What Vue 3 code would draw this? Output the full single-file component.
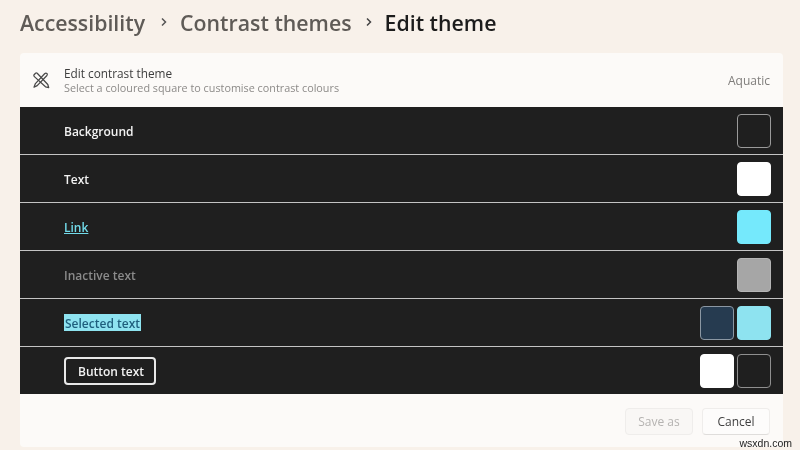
<script setup>
const rows = [
  { label: 'Background', kind: 'plain', swatches: [{ color: '#1f1f1f', edge: '#9a9a9a' }] },
  { label: 'Text', kind: 'plain', swatches: [{ color: '#ffffff', edge: '#ffffff' }] },
  { label: 'Link', kind: 'link', swatches: [{ color: '#75e9fc', edge: '#75e9fc' }] },
  { label: 'Inactive text', kind: 'inactive', swatches: [{ color: '#a6a6a6', edge: '#b5b5b5' }] },
  { label: 'Selected text', kind: 'selected', swatches: [{ color: '#263b50', edge: '#8b97a3' }, { color: '#8ee3f0', edge: '#8ee3f0' }] },
  { label: 'Button text', kind: 'button', swatches: [{ color: '#ffffff', edge: '#ffffff' }, { color: '#1f1f1f', edge: '#8f8f8f' }] },
]
</script>

<template>
  <div class="page">
    <nav class="crumbs">
      <span class="crumb">Accessibility</span>
      <svg class="chev first" viewBox="0 0 8 12"><path d="M2 2.5 5.5 6 2 9.5" fill="none" stroke="#555" stroke-width="1.5" /></svg>
      <span class="crumb">Contrast themes</span>
      <svg class="chev" viewBox="0 0 8 12"><path d="M2 2.5 5.5 6 2 9.5" fill="none" stroke="#444" stroke-width="1.5" /></svg>
      <span class="crumb current">Edit theme</span>
    </nav>

    <section class="card">
      <header class="head">
        <svg class="tool" viewBox="0 0 18 18" fill="none" stroke="#4a4a4a" stroke-width="1.25" stroke-linejoin="round" stroke-linecap="round">
          <path d="M3.4 12.6 12.6 2.8c.7-.7 1.7-.8 2.3-.3s.5 1.5-.2 2.2L5.2 14.6l-3.2 1.6z" />
          <path d="M1.9 4 3.5 2.3c.5-.5 1.2-.5 1.7 0l10.6 11.2.9 3.1-3.2-.8L2.4 5.6C1.9 5.2 1.7 4.5 1.9 4z" />
        </svg>
        <div class="head-text">
          <div class="head-title">Edit contrast theme</div>
          <div class="head-sub">Select a coloured square to customise contrast colours</div>
        </div>
        <span class="theme">Aquatic</span>
      </header>

      <div class="rows">
        <div v-for="row in rows" :key="row.label" class="row">
          <span :class="['label', row.kind]">{{ row.label }}</span>
          <div class="swatches">
            <span
              v-for="(s, i) in row.swatches"
              :key="i"
              class="swatch"
              :style="{ background: s.color, borderColor: s.edge }"
            ></span>
          </div>
        </div>
      </div>

      <footer class="foot">
        <span class="btn disabled">Save as</span>
        <span class="btn">Cancel</span>
      </footer>
    </section>

    <span class="mark">wsxdn.com</span>
  </div>
</template>

<style scoped>
.page {
  position: relative;
  width: 800px;
  height: 450px;
  overflow: hidden;
  box-sizing: border-box;
  padding: 0 17px 0 20px;
  background: #f8f1ea;
  font-family: "Open Sans", "Noto Sans", sans-serif;
  filter: blur(0.35px);
}
.crumbs {
  display: flex;
  align-items: center;
  height: 53px;
  box-sizing: border-box;
  padding-bottom: 9px;
}
.crumb {
  font-size: 21.3px;
  font-weight: 600;
  color: #5f5b57;
}
.crumb.current { color: #1c1c1c; }
.chev { width: 8px; height: 12px; margin: 0 12px 0 13px; }
.chev.first { margin-left: 15px; }
.card {
  background: #fcfaf8;
  border-radius: 4px;
  overflow: hidden;
  height: 394px;
  display: flex;
  flex-direction: column;
}
.head {
  height: 54px;
  display: flex;
  align-items: center;
  padding: 0 13px 0 12px;
  flex: none;
  box-sizing: border-box;
}
.tool { width: 18px; height: 18px; margin-right: 14px; flex: none; }
.head-text { flex: 1; }
.head-title { font-size: 11.8px; line-height: 16px; color: #3d3d3d; }
.head-sub { font-size: 10.8px; line-height: 14px; color: #8c8a88; }
.theme { font-size: 12px; color: #7f7d7b; }
.rows { background: #1f1f1f; flex: none; }
.row {
  height: 48px;
  box-sizing: border-box;
  display: flex;
  align-items: center;
  justify-content: space-between;
  padding: 0 12px 0 44px;
  border-bottom: 1px solid #c4c4c4;
}
.row:last-child { border-bottom: 0; height: 47px; }
.label { font-size: 12px; font-weight: 600; color: #f2f2f2; line-height: 16px; margin-top: 2px; }
.link { color: #72dbea; text-decoration: underline; }
.inactive { color: #8b8b8b; }
.selected {
  background: #8ee3f0;
  color: #1f5f7d;
  padding: 2px 1px 0;
  line-height: 15px;
  margin-top: 0;
}
.button {
  border: 2px solid #e8e8e8;
  border-radius: 4px;
  padding: 5px 12px 0;
  width: 92px;
  height: 28px;
  box-sizing: border-box;
  margin-top: 0;
  white-space: nowrap;
}
.swatches { display: flex; gap: 3px; }
.swatch {
  width: 34px;
  height: 34px;
  box-sizing: border-box;
  border: 1.5px solid;
  border-radius: 4px;
}
.foot {
  flex: 1;
  display: flex;
  justify-content: flex-end;
  align-items: center;
  gap: 9px;
  padding: 1px 13px 0;
}
.btn {
  width: 68px;
  height: 27px;
  box-sizing: border-box;
  display: flex;
  align-items: center;
  justify-content: center;
  padding-top: 1px;
  font-size: 12px;
  color: #3f3f3f;
  background: #fdfcfb;
  border: 1px solid #efedeb;
  border-bottom-color: #dfdddb;
  border-radius: 4px;
}
.btn.disabled { color: #b5b3b1; background: #f9f7f5; border-bottom-color: #efedeb; }
.mark {
  position: absolute;
  right: 8px;
  bottom: 1px;
  font-size: 10.5px;
  color: #222;
  font-family: "Liberation Sans", sans-serif;
}
</style>
